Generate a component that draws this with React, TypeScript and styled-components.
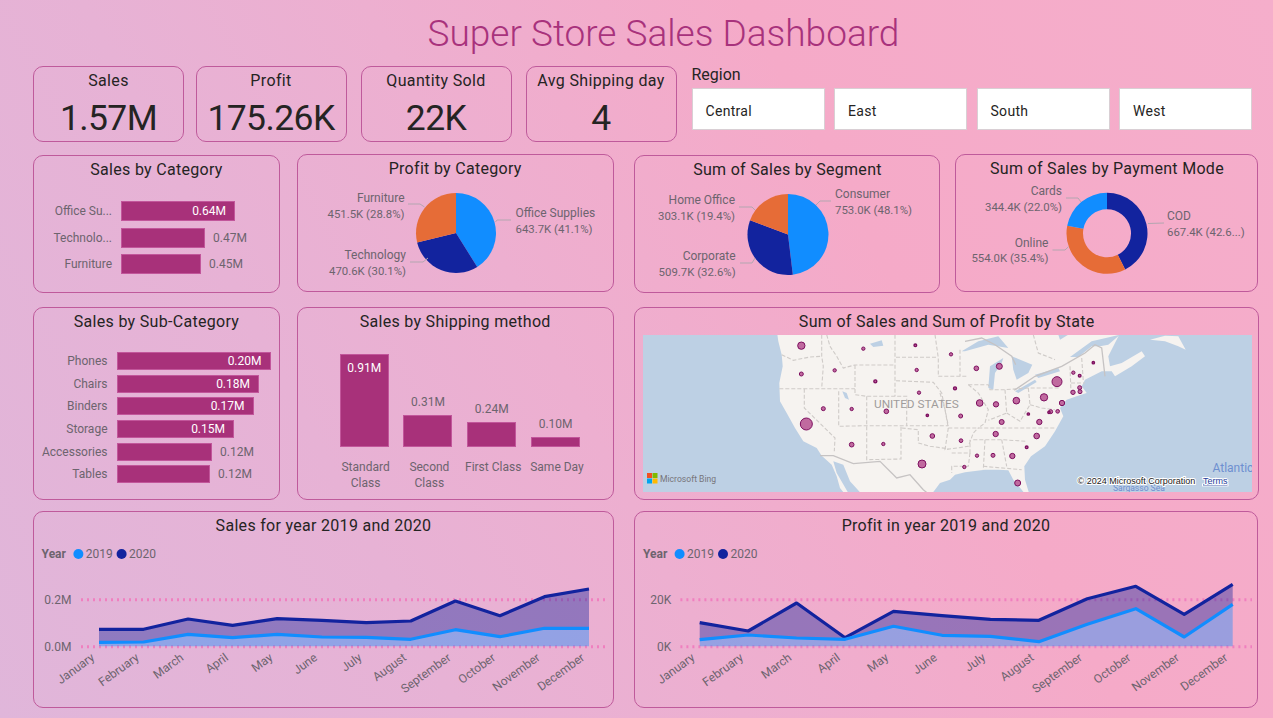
import React from "react";
import styled, { createGlobalStyle } from "styled-components";

const GlobalStyle = createGlobalStyle`
  html, body { margin: 0; padding: 0; height: 100%; overflow: hidden; }
  #root { height: 100%; }
  body { font-family: Roboto, "Liberation Sans", sans-serif; }
`;

const BLUE = "#118dff";
const NAVY = "#12239e";
const ORANGE = "#e66c37";
const BAR = "#a8317a";
const GREY = "#6d646e";

const Page = styled.div`
  box-sizing: border-box;
  width: 1273px;
  height: 718px;
  padding-left: 33px;
  overflow: hidden;
  background: linear-gradient(62deg, #e0b6da 0%, #e7b2d5 28%, #edafd0 45%, #f5aac8 68%, #f5aecb 100%);
`;

const Title = styled.h1`
  margin: 0;
  height: 66px;
  padding-left: 35px;
  display: flex;
  align-items: center;
  justify-content: center;
  width: 1226px;
  box-sizing: border-box;
  font-size: 37px;
  font-weight: 300;
  color: #a8327c;
`;

const KpiRow = styled.div`
  display: flex;
  height: 76px;
`;

const Kpi = styled.div<{ $gap: number }>`
  box-sizing: border-box;
  width: 151px;
  height: 76px;
  margin-right: ${(p) => p.$gap}px;
  padding-top: 1px;
  border: 1px solid #bf5a9b;
  border-radius: 10px;
  display: flex;
  flex-direction: column;
  align-items: center;
  color: #252423;
`;

const KpiLabel = styled.div`
  font-size: 16px;
  line-height: 26px;
  letter-spacing: 0.35px;
`;

const KpiValue = styled.div`
  font-size: 35.5px;
  line-height: 50px;
  letter-spacing: -0.6px;
  margin-top: -1px;
`;

const FilterLabel = styled.div`
  font-size: 16px;
  line-height: 18px;
  color: #252423;
`;

const FilterOptions = styled.div`
  display: flex;
  gap: 9.5px;
  margin-top: 4px;
`;

const FilterOption = styled.div`
  box-sizing: border-box;
  width: 133px;
  height: 42px;
  padding: 4px 0 0 13px;
  display: flex;
  align-items: center;
  background: #fff;
  border: 1px solid #d9cfd4;
  font-size: 14px;
  letter-spacing: 0.3px;
  color: #252423;
`;

const Row = styled.div<{ $top: number }>`
  display: flex;
  align-items: flex-start;
  margin-top: ${(p) => p.$top}px;
`;

const Card = styled.section<{ $w: number; $h: number; $left?: number; $down?: number }>`
  box-sizing: border-box;
  width: ${(p) => p.$w}px;
  height: ${(p) => p.$h}px;
  margin-left: ${(p) => p.$left ?? 0}px;
  margin-top: ${(p) => p.$down ?? 0}px;
  border: 1px solid #bf5a9b;
  border-radius: 10px;
  flex: none;
`;

const CardTitle = styled.h2`
  margin: 0;
  height: 27px;
  line-height: 27px;
  text-align: center;
  font-size: 16px;
  font-weight: 400;
  letter-spacing: 0.3px;
  color: #252423;
  white-space: nowrap;
`;

const Plot = styled.svg`
  display: block;
  overflow: visible;
`;

const Label = styled.text<{ $size?: number }>`
  font-size: ${(p) => p.$size ?? 12}px;
  fill: ${GREY};
  dominant-baseline: central;
`;

const Leader = styled.polyline`
  fill: none;
  stroke: #b3a6b0;
  stroke-width: 1;
`;

const BarList = styled.div<{ $top: number; $gap: number }>`
  display: flex;
  flex-direction: column;
  gap: ${(p) => p.$gap}px;
  padding-top: ${(p) => p.$top}px;
`;

const BarRow = styled.div<{ $h: number; $labelW: number }>`
  display: grid;
  grid-template-columns: ${(p) => p.$labelW}px 1fr;
  column-gap: 9px;
  height: ${(p) => p.$h}px;
  align-items: center;
  font-size: 12px;
  color: ${GREY};
`;

const BarName = styled.div`
  text-align: right;
  white-space: nowrap;
`;

const BarTrack = styled.div`
  display: flex;
  align-items: center;
  height: 100%;
`;

const BarFill = styled.div<{ $w: number }>`
  box-sizing: border-box;
  width: ${(p) => p.$w}px;
  height: 100%;
  display: flex;
  align-items: center;
  justify-content: flex-end;
  padding-right: 8px;
  background: ${BAR};
  border: 1px solid #c2569b;
  color: #fff;
`;

const BarOutside = styled.span`
  margin-left: 8px;
`;

const Columns = styled.div`
  display: flex;
  gap: 14.8px;
  height: 112px;
  padding-left: 42px;
  align-items: flex-end;
`;

const ColumnSlot = styled.div`
  width: 49px;
  display: flex;
  flex-direction: column;
  align-items: center;
  font-size: 12px;
  color: ${GREY};
`;

const ColumnValue = styled.div`
  margin-bottom: 6px;
  line-height: 14px;
`;

const ColumnFill = styled.div<{ $h: number }>`
  box-sizing: border-box;
  width: 49px;
  height: ${(p) => p.$h}px;
  padding-top: 6px;
  text-align: center;
  line-height: 14px;
  background: ${BAR};
  border: 1px solid #c2569b;
  color: #fff;
`;

const ColumnNames = styled.div`
  display: flex;
  padding-left: 36px;
  margin-top: 12px;
`;

const ColumnName = styled.div`
  width: 63.8px;
  text-align: center;
  font-size: 12px;
  line-height: 16px;
  color: ${GREY};
`;

const MapFrame = styled.svg`
  display: block;
  margin-left: 8px;
  width: 609px;
  height: 157px;
`;

const MapCountry = styled.text`
  font-size: 11.8px;
  fill: #a09c9b;
`;

const MapSea = styled.text<{ $size: number }>`
  font-size: ${(p) => p.$size}px;
  fill: #6e8fd0;
`;

const MapCredit = styled.text`
  font-size: 9px;
  font-family: "Liberation Sans", sans-serif;
  fill: #1b1b1b;
  stroke: #fff;
  stroke-width: 2px;
  paint-order: stroke;
`;

const MapTerms = styled(MapCredit)`
  fill: #1d3b9a;
  text-decoration: underline;
`;

const MapBrand = styled.text`
  font-size: 8.6px;
  fill: #77757a;
`;

const Legend = styled.text<{ $bold?: boolean }>`
  font-size: 12px;
  font-weight: ${(p) => (p.$bold ? 700 : 400)};
  fill: ${GREY};
  dominant-baseline: central;
`;

function slicePath(cx: number, cy: number, r: number, a0: number, a1: number, inner = 0) {
  const pt = (rad: number, a: number) => {
    const t = (a / 100) * 2 * Math.PI;
    return `${(cx + rad * Math.sin(t)).toFixed(2)} ${(cy - rad * Math.cos(t)).toFixed(2)}`;
  };
  const large = a1 - a0 > 50 ? 1 : 0;
  if (inner > 0) {
    return `M${pt(r, a0)}A${r} ${r} 0 ${large} 1 ${pt(r, a1)}L${pt(inner, a1)}A${inner} ${inner} 0 ${large} 0 ${pt(inner, a0)}Z`;
  }
  return `M${cx} ${cy}L${pt(r, a0)}A${r} ${r} 0 ${large} 1 ${pt(r, a1)}Z`;
}

type PieLabel = { x: number; y: number; end?: boolean; name: string; value: string; line: string };
type PieSpec = {
  view: string;
  w: number;
  h: number;
  cx: number;
  cy: number;
  r: number;
  inner?: number;
  slices: { share: number; color: string }[];
  labels: PieLabel[];
};

function Pie({ spec }: { spec: PieSpec }) {
  let acc = 0;
  return (
    <Plot viewBox={spec.view} width={spec.w} height={spec.h}>
      {spec.slices.map((s, i) => {
        const d = slicePath(spec.cx, spec.cy, spec.r, acc, acc + s.share, spec.inner);
        acc += s.share;
        return <path key={i} d={d} fill={s.color} />;
      })}
      {spec.labels.map((l) => (
        <g key={l.name}>
          <Leader points={l.line} />
          <Label x={l.x} y={l.y} textAnchor={l.end ? "end" : "start"}>{l.name}</Label>
          <Label $size={11.4} x={l.x} y={l.y + 15.7} textAnchor={l.end ? "end" : "start"}>{l.value}</Label>
        </g>
      ))}
    </Plot>
  );
}

const profitPie: PieSpec = {
  view: "298 182 315 108", w: 315, h: 108, cx: 456, cy: 233, r: 40,
  slices: [
    { share: 41.1, color: BLUE },
    { share: 30.1, color: NAVY },
    { share: 28.8, color: ORANGE },
  ],
  labels: [
    { x: 404.5, y: 198, end: true, name: "Furniture", value: "451.5K (28.8%)", line: "408,204 420,204 424.5,207" },
    { x: 515.5, y: 213, name: "Office Supplies", value: "643.7K (41.1%)", line: "511,220 497,220 495.5,222" },
    { x: 406, y: 255, end: true, name: "Technology", value: "470.6K (30.1%)", line: "410,262 423,262 428,258" },
  ],
};

const segmentPie: PieSpec = {
  view: "636 183 304 109", w: 304, h: 109, cx: 789, cy: 234.5, r: 40.5,
  slices: [
    { share: 48.1, color: BLUE },
    { share: 32.6, color: NAVY },
    { share: 19.3, color: ORANGE },
  ],
  labels: [
    { x: 736, y: 200, end: true, name: "Home Office", value: "303.1K (19.4%)", line: "740,207 753,207 756,210" },
    { x: 736.6, y: 256, end: true, name: "Corporate", value: "509.7K (32.6%)", line: "741,263 753,263 756,258" },
    { x: 836, y: 194, name: "Consumer", value: "753.0K (48.1%)", line: "832,201 821,201 817,205" },
  ],
};

const paymentPie: PieSpec = {
  view: "957 182 301 109", w: 301, h: 109, cx: 1108, cy: 233.3, r: 40.5, inner: 24,
  slices: [
    { share: 42.6, color: NAVY },
    { share: 35.4, color: ORANGE },
    { share: 22.0, color: BLUE },
  ],
  labels: [
    { x: 1063, y: 191, end: true, name: "Cards", value: "344.4K (22.0%)", line: "1067,198 1079,198 1082,202" },
    { x: 1049.4, y: 242.7, end: true, name: "Online", value: "554.0K (35.4%)", line: "1053.5,250 1066,250 1069.5,246.7" },
    { x: 1168, y: 216, name: "COD", value: "667.4K (42.6...)", line: "1165,223 1149,223.5" },
  ],
};

type BarDatum = { name: string; w: number; value: string; inside?: boolean };

const categories: BarDatum[] = [
  { name: "Office Su...", w: 114, value: "0.64M", inside: true },
  { name: "Technolo...", w: 84, value: "0.47M" },
  { name: "Furniture", w: 80, value: "0.45M" },
];

const subCategories: BarDatum[] = [
  { name: "Phones", w: 154, value: "0.20M", inside: true },
  { name: "Chairs", w: 142.5, value: "0.18M", inside: true },
  { name: "Binders", w: 137, value: "0.17M", inside: true },
  { name: "Storage", w: 117.5, value: "0.15M", inside: true },
  { name: "Accessories", w: 95.5, value: "0.12M" },
  { name: "Tables", w: 93.5, value: "0.12M" },
];

function BarChart(props: { data: BarDatum[]; top: number; gap: number; h: number; labelW: number }) {
  return (
    <BarList $top={props.top} $gap={props.gap}>
      {props.data.map((d) => (
        <BarRow key={d.name} $h={props.h} $labelW={props.labelW}>
          <BarName>{d.name}</BarName>
          <BarTrack>
            <BarFill $w={d.w}>{d.inside ? d.value : null}</BarFill>
            {d.inside ? null : <BarOutside>{d.value}</BarOutside>}
          </BarTrack>
        </BarRow>
      ))}
    </BarList>
  );
}

const shipping = [
  { value: "0.91M", h: 93.5, inside: true, name: "Standard Class" },
  { value: "0.31M", h: 32.5, name: "Second Class" },
  { value: "0.24M", h: 25, name: "First Class" },
  { value: "0.10M", h: 10, name: "Same Day" },
];

const MONTHS = ["January", "February", "March", "April", "May", "June", "July", "August", "September", "October", "November", "December"];

const toY = (z: number) => 505 + z / 3;
const linePts = (xs: number[], zs: number[]) => zs.map((z, i) => `${xs[i].toFixed(1)},${toY(z).toFixed(1)}`);

type TrendSpec = {
  view: string;
  w: number;
  h: number;
  x0: number;
  step: number;
  gridL: number;
  gridR: number;
  axisX: number;
  ticks: [string, string];
  legendX: number[];
  high: number[];
  low: number[];
  labelShift: number;
};

function Trend({ spec }: { spec: TrendSpec }) {
  const xs = MONTHS.map((_, i) => spec.x0 + i * spec.step);
  const hi = linePts(xs, spec.high);
  const lo = linePts(xs, spec.low);
  const base = toY(424).toFixed(1);
  const [lx0, lx1, lx2, lx3, lx4] = spec.legendX;
  return (
    <Plot viewBox={spec.view} width={spec.w} height={spec.h}>
      <line x1={spec.gridL} x2={spec.gridR} y1={599.7} y2={599.7} stroke="#f07fbf" strokeWidth={3} strokeDasharray="2 4" />
      <line x1={spec.gridL} x2={spec.gridR} y1={646.7} y2={646.7} stroke="#f07fbf" strokeWidth={3} strokeDasharray="2 4" />
      <polygon points={[...hi, ...[...lo].reverse()].join(" ")} fill={NAVY} fillOpacity={0.4} />
      <polygon points={[`${xs[0].toFixed(1)},${base}`, ...lo, `${xs[11].toFixed(1)},${base}`].join(" ")} fill={BLUE} fillOpacity={0.4} />
      <polyline points={hi.join(" ")} fill="none" stroke={NAVY} strokeWidth={3.2} strokeLinejoin="round" />
      <polyline points={lo.join(" ")} fill="none" stroke={BLUE} strokeWidth={3.2} strokeLinejoin="round" />
      <Label x={spec.axisX} y={599.7} textAnchor="end">{spec.ticks[0]}</Label>
      <Label x={spec.axisX} y={646.7} textAnchor="end">{spec.ticks[1]}</Label>
      <Legend $bold x={lx0} y={554}>Year</Legend>
      <circle cx={lx1} cy={554} r={5} fill={BLUE} />
      <Legend x={lx2} y={554}>2019</Legend>
      <circle cx={lx3} cy={554} r={5} fill={NAVY} />
      <Legend x={lx4} y={554}>2020</Legend>
      {MONTHS.map((m, i) => {
        const x = xs[i] - spec.labelShift;
        return (
          <Label key={m} x={x} y={656} textAnchor="end" transform={`rotate(-36 ${x} 656)`}>{m}</Label>
        );
      })}
    </Plot>
  );
}

const salesTrend: TrendSpec = {
  view: "34 539 579 168", w: 579, h: 168, x0: 99, step: 44.55, gridL: 81, gridR: 605, axisX: 71.4,
  ticks: ["0.2M", "0.0M"], legendX: [41.6, 78.4, 85.7, 121.6, 129],
  high: [373, 373, 342, 361, 341, 346, 353, 348, 288, 332, 275, 252],
  low: [412, 411, 388, 398, 388, 396, 397, 403, 374, 395, 370, 370],
  labelShift: 6,
};

const profitTrend: TrendSpec = {
  view: "635 539 622 168", w: 622, h: 168, x0: 699.7, step: 48.45, gridL: 680.4, gridR: 1252, axisX: 671.4,
  ticks: ["20K", "0K"], legendX: [643, 679.6, 687, 723, 730.5],
  high: [353, 378, 294, 398, 319, 332, 343, 346, 281, 244, 328, 238],
  low: [404, 390, 399, 403, 364, 391, 394, 410, 358, 311, 396, 298],
  labelShift: 6.5,
};

/* map: coordinates read from two 3x crops */
const w = (x: number, y: number) => `${(x / 3 - 3).toFixed(1)} ${(y / 3 - 2).toFixed(1)}`;
const e = (x: number, y: number) => `${(x / 3 + 302).toFixed(1)} ${(y / 3 - 2).toFixed(1)}`;
type P = [number, number];
const pathOf = (f: (x: number, y: number) => string, pts: P[], close = false) =>
  "M" + pts.map((p) => f(p[0], p[1])).join("L") + (close ? "Z" : "");

const LAND =
  pathOf(w, [[410, -10], [415, 25], [425, 65], [428, 100], [418, 150], [420, 205], [440, 240], [465, 285], [490, 325], [530, 345], [545, 368], [575, 395], [590, 430], [600, 465], [620, 490], [870, 490], [885, 470], [900, 450], [930, 440]]) +
  pathOf(e, [[30, 425], [60, 418], [120, 410], [160, 410], [190, 412], [205, 440], [230, 470], [245, 490], [255, 490], [240, 440], [238, 400], [258, 370], [300, 340], [330, 295], [355, 250], [345, 225], [365, 200], [395, 190], [425, 180], [410, 160], [420, 140], [470, 115], [500, 115], [510, 130], [560, 100], [600, 70], [590, 55], [530, 90], [495, 100], [490, 70], [530, -10]]).replace("M", "L") +
  "Z";

const WATER: string[] = [
  pathOf(w, [[580, 385], [610, 395], [630, 445], [662, 480], [625, 480], [590, 420]], true),
  pathOf(w, [[607, 175], [620, 180], [627, 200], [615, 195]], true),
  pathOf(w, [[690, 32], [725, 22], [730, 38], [700, 42]], true),
  pathOf(e, [[50, 55], [100, 25], [160, 10], [190, 45], [130, 35], [60, 55]], true),
  pathOf(e, [[135, 100], [175, 75], [170, 90], [150, 120], [145, 170], [130, 165]], true),
  pathOf(e, [[200, 70], [262, 95], [250, 120], [215, 140], [205, 110]], true),
  pathOf(e, [[210, 175], [270, 140], [275, 147], [220, 180]], true),
  pathOf(e, [[270, 125], [340, 105], [345, 115], [280, 135]], true),
  pathOf(e, [[375, 72], [440, 25], [525, 5], [490, 35], [465, 40], [440, 40], [400, 72]], true),
  pathOf(e, [[340, 5], [370, 5], [345, 20]], true),
];

const ISLAND = pathOf(e, [[615, 20], [660, 8], [700, 10], [722, 50], [700, 40], [660, 25]], true);

const BORDERS_SOLID: string[] = [
  pathOf(w, [[540, 368], [580, 368], [640, 392], [720, 385], [770, 435], [810, 425], [850, 470], [862, 480]]),
  pathOf(e, [[60, 25], [110, 15], [150, 35], [200, 70], [212, 95]]),
  pathOf(e, [[208, 172], [270, 130], [350, 100], [420, 60], [450, 35], [470, 45], [480, 130]]),
];

const BORDERS_DASHED: string[] = [
  pathOf(w, [[425, 65], [460, 82], [510, 72], [545, 70]]),
  pathOf(w, [[545, 5], [545, 70], [550, 100], [545, 165]]),
  pathOf(w, [[560, 5], [570, 40], [590, 70], [610, 105], [645, 96], [765, 96]]),
  pathOf(w, [[418, 167], [645, 167]]),
  pathOf(w, [[493, 167], [493, 225], [585, 315], [583, 355]]),
  pathOf(w, [[596, 175], [596, 280], [680, 278], [800, 278]]),
  pathOf(w, [[680, 190], [680, 380], [783, 378], [783, 278]]),
  pathOf(w, [[645, 96], [645, 185], [680, 190], [800, 190], [800, 278], [925, 278]]),
  pathOf(w, [[765, 5], [765, 190]]),
  pathOf(w, [[768, 73], [890, 73]]),
  pathOf(w, [[768, 143], [880, 148], [905, 180], [925, 278]]),
  pathOf(w, [[885, 5], [895, 75], [895, 130]]),
  pathOf(w, [[785, 285], [835, 290], [835, 330], [870, 340], [925, 347]]),
  pathOf(e, [[-20, 130], [70, 130]]),
  pathOf(e, [[45, 50], [45, 130]]),
  pathOf(e, [[70, 155], [130, 155], [135, 170], [180, 170], [250, 165], [345, 165]]),
  pathOf(e, [[70, 155], [100, 180], [130, 230], [120, 270], [100, 285]]),
  pathOf(e, [[180, 170], [185, 240], [130, 262]]),
  pathOf(e, [[250, 165], [255, 215], [225, 265], [185, 240]]),
  pathOf(e, [[255, 215], [290, 225], [330, 230]]),
  pathOf(e, [[-15, 180], [0, 230], [10, 285], [100, 285], [330, 285]]),
  pathOf(e, [[10, 285], [0, 350], [70, 340], [85, 300], [100, 285]]),
  pathOf(e, [[85, 320], [170, 320], [245, 325]]),
  pathOf(e, [[120, 320], [115, 410]]),
  pathOf(e, [[170, 320], [185, 400]]),
  pathOf(e, [[20, 360], [75, 360], [75, 320]]),
  pathOf(e, [[75, 360], [70, 400], [20, 400], [20, 420]]),
  pathOf(e, [[115, 400], [230, 410]]),
  pathOf(e, [[265, 5], [280, 60], [330, 80]]),
  pathOf(e, [[375, 100], [378, 180]]),
  pathOf(e, [[410, 75], [415, 145]]),
  pathOf(e, [[378, 150], [420, 150]]),
];

const DOTS_W: number[][] = [
  [484, 38, 11], [670, 47, 5], [826, 37, 4], [830, 111, 5], [484, 123, 6], [584, 112, 5], [706, 145, 4.5], [837, 179, 5],
  [550, 227, 6], [635, 228, 5], [739, 235, 7], [862, 247, 3.5], [499, 273, 18], [877, 309, 7], [635, 335, 7], [730, 333, 5], [846, 393, 12],
];
const DOTS_E: number[][] = [
  [18, 64, 5], [94, 106, 7], [163, 100, 9], [30, 166, 4.5], [104, 210, 10], [153, 214, 8], [214, 203, 10], [297, 193, 11],
  [336, 146, 15], [385, 119, 5], [404, 128, 4], [445, 89, 3.5], [404, 164, 6], [405, 176, 6], [384, 178, 6.5], [351, 210, 8],
  [338, 235, 5.5], [317, 236, 6], [312, 238, 3.5], [250, 243, 3.5], [283, 267, 8], [170, 267, 7.5], [47, 249, 6], [152, 303, 8],
  [275, 309, 8.5], [48, 323, 5.5], [245, 343, 4], [96, 368, 5], [144, 367, 6], [202, 369, 8], [58, 402, 5], [218, 450, 9],
];

function StateMap() {
  const dots = [
    ...DOTS_W.map(([x, y, r]) => ({ x: x / 3 - 3, y: y / 3 - 2, r: r / 3 })),
    ...DOTS_E.map(([x, y, r]) => ({ x: x / 3 + 302, y: y / 3 - 2, r: r / 3 })),
  ];
  return (
    <MapFrame viewBox="0 0 609 157">
      <rect width={609} height={157} fill="#bdd0e4" />
      <path d={LAND} fill="#f6f3f0" />
      <path d={ISLAND} fill="#f6f3f0" />
      {WATER.map((d, i) => <path key={i} d={d} fill="#bdd0e4" />)}
      {BORDERS_DASHED.map((d, i) => (
        <path key={i} d={d} fill="none" stroke="#cfcbc8" strokeWidth={1.1} strokeDasharray="4 2" />
      ))}
      {BORDERS_SOLID.map((d, i) => (
        <path key={i} d={d} fill="none" stroke="#c6c3c3" strokeWidth={1.3} />
      ))}
      <MapCountry x={231} y={72.5}>UNITED STATES</MapCountry>
      {dots.map((d, i) => (
        <circle key={i} cx={d.x} cy={d.y} r={d.r} fill="#c06a9f" stroke="#7e1060" strokeWidth={d.r < 1.6 ? 1.4 : 1} />
      ))}
      <rect x={4} y={138} width={5} height={5} fill="#f25022" />
      <rect x={9.5} y={138} width={5} height={5} fill="#7fba00" />
      <rect x={4} y={143.5} width={5} height={5} fill="#00a4ef" />
      <rect x={9.5} y={143.5} width={5} height={5} fill="#ffb900" />
      <MapBrand x={17} y={147}>Microsoft Bing</MapBrand>
      <MapSea $size={12} x={569.5} y={137}>Atlantic</MapSea>
      <MapSea $size={8.5} x={470} y={156}>Sargasso Sea</MapSea>
      <MapCredit x={434.5} y={148.5}>© 2024 Microsoft Corporation</MapCredit>
      <MapTerms x={560} y={148.5}>Terms</MapTerms>
    </MapFrame>
  );
}

export default function App() {
  return (
    <Page>
      <GlobalStyle />
      <Title>Super Store Sales Dashboard</Title>
      <KpiRow>
        <Kpi $gap={11.5}><KpiLabel>Sales</KpiLabel><KpiValue>1.57M</KpiValue></Kpi>
        <Kpi $gap={14}><KpiLabel>Profit</KpiLabel><KpiValue>175.26K</KpiValue></Kpi>
        <Kpi $gap={14}><KpiLabel>Quantity Sold</KpiLabel><KpiValue>22K</KpiValue></Kpi>
        <Kpi $gap={15}><KpiLabel>Avg Shipping day</KpiLabel><KpiValue>4</KpiValue></Kpi>
        <div>
          <FilterLabel>Region</FilterLabel>
          <FilterOptions>
            <FilterOption>Central</FilterOption>
            <FilterOption>East</FilterOption>
            <FilterOption>South</FilterOption>
            <FilterOption>West</FilterOption>
          </FilterOptions>
        </div>
      </KpiRow>
      <Row $top={12}>
        <Card $w={247} $h={138} $down={1}>
          <CardTitle>Sales by Category</CardTitle>
          <BarChart data={categories} top={18} gap={6.5} h={20} labelW={78} />
        </Card>
        <Card $w={317} $h={138} $left={16.7}>
          <CardTitle>Profit by Category</CardTitle>
          <Pie spec={profitPie} />
        </Card>
        <Card $w={306} $h={138} $left={20.8} $down={1}>
          <CardTitle>Sum of Sales by Segment</CardTitle>
          <Pie spec={segmentPie} />
        </Card>
        <Card $w={303} $h={138} $left={15}>
          <CardTitle>Sum of Sales by Payment Mode</CardTitle>
          <Pie spec={paymentPie} />
        </Card>
      </Row>
      <Row $top={14.4}>
        <Card $w={247} $h={193}>
          <CardTitle>Sales by Sub-Category</CardTitle>
          <BarChart data={subCategories} top={16.6} gap={4.7} h={18} labelW={73.5} />
        </Card>
        <Card $w={317} $h={193} $left={16.7}>
          <CardTitle>Sales by Shipping method</CardTitle>
          <Columns>
            {shipping.map((s) => (
              <ColumnSlot key={s.name}>
                {s.inside ? null : <ColumnValue>{s.value}</ColumnValue>}
                <ColumnFill $h={s.h}>{s.inside ? s.value : null}</ColumnFill>
              </ColumnSlot>
            ))}
          </Columns>
          <ColumnNames>
            {shipping.map((s) => <ColumnName key={s.name}>{s.name}</ColumnName>)}
          </ColumnNames>
        </Card>
        <Card $w={624.5} $h={193} $left={20.8}>
          <CardTitle>Sum of Sales and Sum of Profit by State</CardTitle>
          <StateMap />
        </Card>
      </Row>
      <Row $top={10.6}>
        <Card $w={581} $h={197}>
          <CardTitle>Sales for year 2019 and 2020</CardTitle>
          <Trend spec={salesTrend} />
        </Card>
        <Card $w={624} $h={197} $left={20}>
          <CardTitle>Profit in year 2019 and 2020</CardTitle>
          <Trend spec={profitTrend} />
        </Card>
      </Row>
    </Page>
  );
}
